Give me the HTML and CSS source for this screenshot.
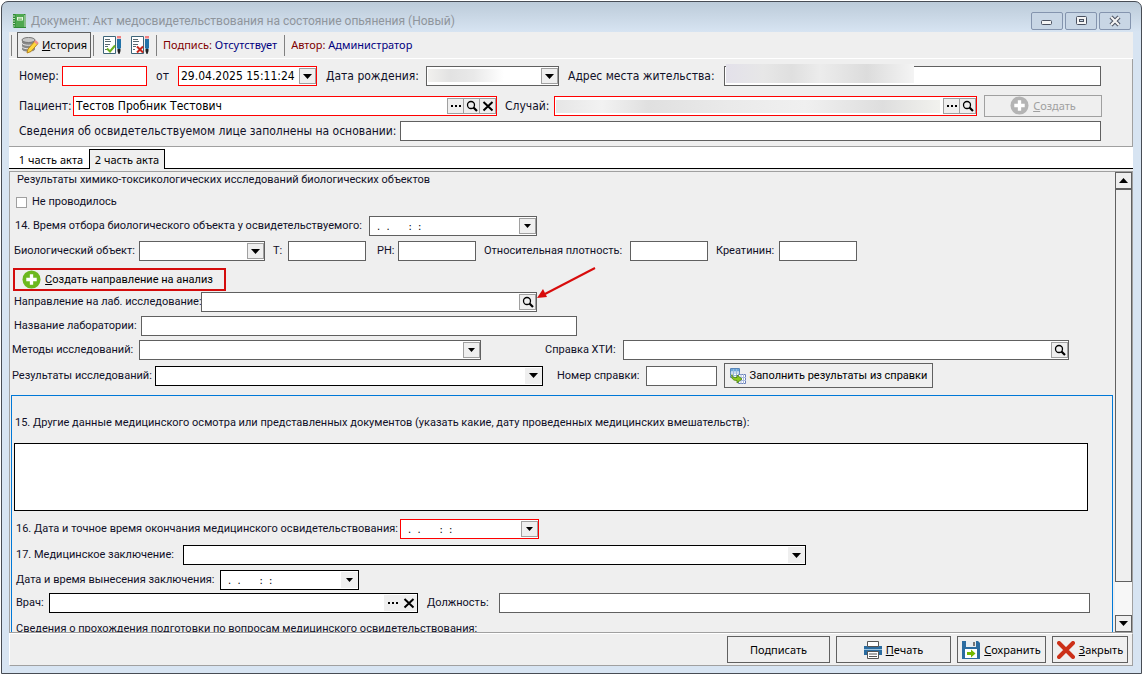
FILE: index.html
```html
<!DOCTYPE html>
<html lang="ru">
<head>
<meta charset="utf-8">
<title>Документ: Акт медосвидетельствования на состояние опьянения (Новый)</title>
<link rel="stylesheet" href="styles.css">
</head>
<body>
<svg class="defs" aria-hidden="true">
  <symbol id="i-down" viewBox="0 0 9 5"><path d="M0 0h9L4.500 5z"/></symbol>
  <symbol id="i-up" viewBox="0 0 9 5"><path d="M0 5h9L4.500 0z"/></symbol>
  <symbol id="i-dots" viewBox="0 0 12 12"><path d="M1 5h2v2H1zM5 5h2v2H5zM9 5h2v2H9z"/></symbol>
  <symbol id="i-find" viewBox="0 0 12 12"><circle cx="5" cy="5" r="3.500" fill="none" stroke="#000" stroke-width="1.300"/><path d="M7.500 7.500L11 11" stroke="#000" stroke-width="2.200"/></symbol>
  <symbol id="i-x" viewBox="0 0 12 12"><path d="M1.500 2L10.500 10.500M10.500 2L1.500 10.500" stroke="#000" stroke-width="2"/></symbol>
  <symbol id="i-doc" viewBox="0 0 20 20"><path d="M1.500 1.500h12v17h-12z" fill="#fff" stroke="#3c6478"/><path d="M3 4.500h5M3 6.500h6M3 9.500h5M3 11.500h3M3 14.500h2" stroke="#5a6a72"/><path d="M15 4h4v9l-2 2-2-2z" fill="#2272a8"/><path d="M15 1h4v2.500h-4z" fill="#f08080"/><path d="M15.500 14h3v2l-1 3h-1l-1-3z" fill="#222"/></symbol>
</svg>
<div class="window">
  <header class="titlebar">
    <svg class="app-icon" viewBox="0 0 16 16"><path d="M2 1h12l1 1v13H3l-1-1z" fill="#2f8a35"/><path d="M4.500 1h8.500v13H4.500z" fill="#4fa850"/><path d="M6 4h6v3.500H6z" fill="#e8f6df"/><path d="M7 5.200h4M7 6.500h4" stroke="#6ab060" stroke-width=".7"/><path d="M1 3h3M1 5.500h3M1 8h3M1 10.500h3M1 13h3" stroke="#c4dec2"/><path d="M14 2v12" stroke="#e4f0e0"/></svg>
    <h1>Документ: Акт медосвидетельствования на состояние опьянения (Новый)</h1>
    <div class="controls">
      <button type="button" aria-label="Свернуть"><svg viewBox="0 0 14 12"><rect x="1.500" y="5.500" width="10" height="4" rx="1" fill="#f4f4f4" stroke="#4a5160"/></svg></button>
      <button type="button" aria-label="Развернуть"><svg viewBox="0 0 14 12"><rect x="2.500" y="1.500" width="10" height="8" rx="1" fill="#f4f4f4" stroke="#4a5160"/><rect x="5.500" y="4.500" width="4" height="2" fill="#c4d3e2" stroke="#4a5160"/></svg></button>
      <button type="button" aria-label="Закрыть окно"><svg viewBox="0 0 14 12"><path d="M3 2l8 8M11 2l-8 8" stroke="#4a5160" stroke-width="4.200"/><path d="M3 2l8 8M11 2l-8 8" stroke="#f4f4f4" stroke-width="2.200"/></svg></button>
    </div>
  </header>
  <main class="client">
    <div class="toolbar">
      <span class="sep"></span>
      <button type="button" class="btn history"><svg viewBox="0 0 18 18"><path d="M1 4v9c0 4 13 4 13 0V4" fill="#888"/><path d="M1 7c0 3 13 3 13 0M1 10.500c0 3 13 3 13 0M1 14c0 3 13 3 13 0" fill="none" stroke="#e6e6e6"/><ellipse cx="7.500" cy="4" rx="6.500" ry="2.500" fill="#c8c8c8" stroke="#777"/><path d="M6 17l1-4 7-8 3 2.500-7 8z" fill="#ffd83c" stroke="#b68420"/><path d="M13 6l1.500-2 3 2.500-1.500 2z" fill="#f09090"/></svg><span><u>И</u>стория</span></button>
      <span class="sep"></span>
      <button type="button" class="tool" aria-label="Подписать документ"><svg viewBox="0 0 20 20"><use href="#i-doc"/><path d="M5 13.500l3 3 5-6" fill="none" stroke="#6cb01c" stroke-width="2"/></svg></button>
      <button type="button" class="tool" aria-label="Снять подпись"><svg viewBox="0 0 20 20"><use href="#i-doc"/><path d="M7 11.500l6 6M13 11.500l-6 6" fill="none" stroke="#c8281c" stroke-width="2"/></svg></button>
      <span class="sep"></span>
      <span class="status sign"><b>Подпись:</b> Отсутствует</span>
      <span class="sep"></span>
      <span class="status"><b>Автор:</b> Администратор</span>
    </div>

    <section class="summary">
      <div class="row r-number">
        <label for="num">Номер:</label><span class="field req"><input id="num"></span>
        <label for="dt" class="center">от</label><span class="field req"><input id="dt" value="29.04.2025 15:11:24"><button type="button" aria-label="Выбрать дату"><svg class="tri"><use href="#i-down"/></svg></button></span>
        <label for="dob">Дата рождения:</label><span class="field"><span class="veil dob"></span><input id="dob"><button type="button" aria-label="Выбрать дату рождения"><svg class="tri"><use href="#i-down"/></svg></button></span>
        <label for="addr">Адрес места жительства:</label><span class="field"><span class="veil addr"></span><input id="addr"></span>
      </div>
      <div class="row r-patient">
        <label for="pat">Пациент:</label><span class="field req"><input id="pat" value="Тестов Пробник Тестович"><button type="button" aria-label="Список пациентов"><svg><use href="#i-dots"/></svg></button><button type="button" aria-label="Найти пациента"><svg><use href="#i-find"/></svg></button><button type="button" aria-label="Очистить пациента"><svg><use href="#i-x"/></svg></button></span>
        <label for="case">Случай:</label><span class="field req"><span class="veil case"></span><input id="case"><button type="button" aria-label="Список случаев"><svg><use href="#i-dots"/></svg></button><button type="button" aria-label="Найти случай"><svg><use href="#i-find"/></svg></button></span>
        <button type="button" class="btn create" disabled><svg viewBox="0 0 20 20"><circle cx="10" cy="10" r="9.500" fill="#b4b4b4"/><path d="M10 4.500v11M4.500 10h11" stroke="#fff" stroke-width="3.500"/></svg><span><u>С</u>оздать</span></button>
      </div>
      <div class="row r-basis">
        <label for="basis">Сведения об освидетельствуемом лице заполнены на основании:</label><span class="field"><input id="basis"></span>
      </div>
    </section>

    <nav class="tabs"><button type="button">1 часть акта</button><button type="button" class="active">2 часть акта</button></nav>

    <div class="pane">
      <div class="form">
        <div class="upper">
          <h2>Результаты химико-токсикологических исследований биологических объектов</h2>
          <label class="check"><input type="checkbox">Не проводилось</label>
          <div class="row r-sample">
            <label for="smp">14. Время отбора биологического объекта у освидетельствуемого:</label><span class="field date"><input id="smp" value=".  .      :  :"><button type="button" aria-label="Выбрать время отбора"><svg class="tri small"><use href="#i-down"/></svg></button></span>
          </div>
          <div class="row r-bio">
            <label for="bio">Биологический объект:</label><span class="field"><select id="bio"><option></option></select><i class="drop"><svg class="tri"><use href="#i-down"/></svg></i></span>
            <label for="t">T:</label><span class="field"><input id="t"></span>
            <label for="ph">PH:</label><span class="field"><input id="ph"></span>
            <label for="dens">Относительная плотность:</label><span class="field"><input id="dens"></span>
            <label for="crea">Креатинин:</label><span class="field"><input id="crea"></span>
          </div>
          <button type="button" class="btn referral"><svg viewBox="0 0 20 20"><circle cx="10" cy="10" r="9.500" fill="#6cb81e"/><path d="M10 4.500v11M4.500 10h11" stroke="#fff" stroke-width="3.500"/></svg><span><u>С</u>оздать направление на анализ</span></button>
          <div class="row r-ref">
            <label for="ref">Направление на лаб. исследование:</label><span class="field"><input id="ref"><button type="button" aria-label="Найти направление"><svg><use href="#i-find"/></svg></button>
              <svg class="pointer" viewBox="0 0 60 34"><path d="M58 2L8 28" stroke="#d80c0c" stroke-width="2"/><path d="M0 32l6-9 4 8z" fill="#d80c0c"/></svg></span>
          </div>
          <div class="row r-lab">
            <label for="lab">Название лаборатории:</label><span class="field"><input id="lab"></span>
          </div>
          <div class="row r-method">
            <label for="met">Методы исследований:</label><span class="field"><select id="met"><option></option></select><i class="drop"><svg class="tri small"><use href="#i-down"/></svg></i></span>
            <label for="hti">Справка ХТИ:</label><span class="field"><input id="hti"><button type="button" aria-label="Найти справку"><svg><use href="#i-find"/></svg></button></span>
          </div>
          <div class="row r-result">
            <label for="res">Результаты исследований:</label><span class="field dark"><select id="res"><option></option></select><i class="drop"><svg class="tri"><use href="#i-down"/></svg></i></span>
            <label for="cert">Номер справки:</label><span class="field"><input id="cert"></span>
            <button type="button" class="btn fill"><svg viewBox="0 0 16 16"><path d="M.5.5h9v9h-9z" fill="#fff" stroke="#5a86b8"/><path d="M1 1h8v2.500H1z" fill="#6aa8dc"/><path d="M.5 5h9M.5 7.500h9M3.500 1v8M6.500 1v8" stroke="#9ab8dc"/><path d="M8.500 6.500h7v9h-7z" fill="#fff" stroke="#6a80b8"/><path d="M8 9.500h8M8 12.500h8M11 6v10M13.500 6v10" stroke="#a8b8dc"/><path d="M2 6.500c0 2.500 1 3 5 3V7l5 4-5 4v-2.500c-4 0-6-2-5-6z" fill="#8cc820" stroke="#4a8010" stroke-width=".8"/></svg><span>Заполнить результаты из справки</span></button>
          </div>
        </div>
        <div class="group">
          <label for="other" class="other">15. Другие данные медицинского осмотра или представленных документов (указать какие, дату проведенных медицинских вмешательств):</label>
          <textarea id="other"></textarea>
          <div class="row r-end">
            <label for="end">16. Дата и точное время окончания медицинского освидетельствования:</label><span class="field req date"><input id="end" value=".  .      :  :"><button type="button" aria-label="Выбрать дату окончания"><svg class="tri small"><use href="#i-down"/></svg></button></span>
          </div>
          <div class="row r-concl">
            <label for="con">17. Медицинское заключение:</label><span class="field dark"><select id="con"><option></option></select><i class="drop"><svg class="tri"><use href="#i-down"/></svg></i></span>
          </div>
          <div class="row r-issued">
            <label for="iss">Дата и время вынесения заключения:</label><span class="field dark date"><input id="iss" value=".  .      :  :"><button type="button" aria-label="Выбрать дату заключения"><svg class="tri small"><use href="#i-down"/></svg></button></span>
          </div>
          <div class="row r-doctor">
            <label for="doc">Врач:</label><span class="field dark"><input id="doc"><button type="button" aria-label="Список врачей"><svg><use href="#i-dots"/></svg></button><button type="button" aria-label="Очистить врача"><svg><use href="#i-x"/></svg></button></span>
            <label for="post">Должность:</label><span class="field"><input id="post"></span>
          </div>
          <p class="training">Сведения о прохождения подготовки по вопросам медицинского освидетельствования:</p>
        </div>
      </div>
      <div class="scroll">
        <button type="button" aria-label="Вверх"><svg class="tri"><use href="#i-up"/></svg></button>
        <span class="thumb"></span><span class="track"></span>
        <button type="button" aria-label="Вниз"><svg class="tri"><use href="#i-down"/></svg></button>
      </div>
    </div>

    <footer class="actions">
      <button type="button" class="btn a-sign">Подписать</button>
      <button type="button" class="btn a-print"><svg viewBox="0 0 18 18"><path d="M0 5h18v9H0z" fill="#2b6ca0"/><path d="M3.500.5h11v5h-11z" fill="#fff" stroke="#555"/><path d="M0 8.500h18" stroke="#9cc4e0"/><path d="M3.500 10.500h11v7h-11z" fill="#fff" stroke="#555"/><path d="M5 13h8M5 15.500h8" stroke="#555"/></svg><span><u>П</u>ечать</span></button>
      <button type="button" class="btn a-save"><svg viewBox="0 0 18 18"><path d="M0 0h16l2 2v16H0z" fill="#2b6ca0"/><path d="M4 0h10v6H4z" fill="#e8eef2"/><path d="M11 1h2v4h-2z" fill="#777"/><path d="M3 8h12v9H3z" fill="#fff"/><path d="M5 11h4V8.500l4.500 4-4.500 4V14H5z" fill="#74b800"/></svg><span><u>С</u>охранить</span></button>
      <button type="button" class="btn a-close"><svg viewBox="0 0 18 18"><path d="M2 2l14 14M16 2L2 16" stroke="#cc3018" stroke-width="4" stroke-linecap="round"/></svg><span><u>З</u>акрыть</span></button>
    </footer>
  </main>
</div>
</body>
</html>
```
FILE: styles.css
```css
* { box-sizing: border-box; }

body {
  margin: 0;
  height: 100vh;
  padding: 1px 0 1px 1px;
  background: #fff;
  color: #101028;
  font: 11px/14px "Noto Sans", sans-serif;
}

button, input, select, textarea { font: inherit; color: #000; margin: 0; border-radius: 0; }
input, select, textarea { outline: 0; }
svg { display: block; flex: none; }
.defs { position: absolute; width: 0; height: 0; }

.window {
  height: 100%;
  min-height: 500px;
  display: flex;
  flex-direction: column;
  padding: 0 8px 7px 7px;
  border: 1px solid #474c54;
  border-radius: 7px 7px 0 0;
  background: #d7e4f2;
  background-image: linear-gradient(#bccbd9, #d7e4f2 30px);
}

.titlebar { display: flex; align-items: center; height: 30px; flex: none; padding: 7px 2px 0; }
.titlebar h1 { flex: 1; margin: 0 0 0 4px; font: 12px/14px Roboto, sans-serif; color: #8f959c; white-space: nowrap; }
.app-icon { width: 16px; height: 16px; }
.controls { display: flex; gap: 2px; }
.controls button { width: 32px; height: 18px; padding: 0; border: 1px solid #8494ae; border-radius: 2px; background: #c8d6e5; display: flex; align-items: center; justify-content: center; }
.controls svg { width: 14px; height: 12px; }

.client { flex: 1; min-height: 0; display: flex; flex-direction: column; background: #efefef; }

.toolbar { display: flex; align-items: center; flex: none; height: 27px; padding: 0 2px; border-bottom: 1px solid #fff; }
.sep { width: 1px; height: 21px; background: #808080; }
.btn { display: flex; align-items: center; justify-content: center; gap: 4px; padding: 0; border: 1px solid #606060; background: #efefef; white-space: nowrap; }
.history { width: 74px; height: 26px; margin: 0 2px 0 5px; gap: 3px; background: #ececec; }
.history svg { width: 18px; height: 18px; }
.tool { width: 20px; height: 20px; padding: 0; margin-left: 8px; border: 0; background: none; }
.tool + .sep { margin-left: 6px; }
.status { margin: 0 6px; color: #000080; white-space: nowrap; }
.status.sign { margin-right: 7px; }
.status b { font-weight: 400; color: #800000; }

.summary { flex: none; height: 88px; padding: 6px 31px 0 10px; border-right: 1px solid #a0a0a0; border-bottom: 1px solid #a0a0a0; font: 12px/14px "DejaVu Sans Condensed", "Noto Sans", sans-serif; }
.row { display: grid; align-items: center; white-space: nowrap; }
.row label { overflow: visible; min-width: 0; }
.center { text-align: center; }

.field { position: relative; display: flex; height: 20px; min-width: 0; padding: 1px 0 1px 1px; border: 1px solid #606060; background: #fff; }
.field.req { border-color: #f00; }
.field.dark { border-color: #000; }
.field input, .field select { flex: 1; min-width: 0; width: 0; height: 100%; padding: 0 1px; border: 0; background: none; appearance: none; }
.field button, .drop { flex: none; width: 17px; height: 16px; padding: 0; border: 1px solid #a0a0a0; background: #efefef; display: flex; align-items: center; justify-content: center; pointer-events: none; }
.field button + button { margin-left: -1px; }
.field.dark button, .field.dark .drop { border-color: #efefef; }
.field svg { width: 12px; height: 12px; }
svg.tri { width: 9px; height: 5px; }
.field svg.small { width: 7px; height: 4px; }
.date input { padding-left: 6px; white-space: pre; font: 11px/14px "DejaVu Sans Condensed", sans-serif; }

.veil { position: absolute; background: linear-gradient(90deg, #f1f0ee, #e2e2e2 30%, #e9e9e9 60%, #fff); }
.veil.dob { left: 1px; top: 2px; width: 76px; height: 13px; }
.veil.addr { left: 1px; top: -3px; width: 188px; height: 19px; background: linear-gradient(90deg, #e3e1ea, #e7e7e7 20%, #dfdfdf 35%, #ececec 50%, #dcdcdc 75%, #f4f4f4); }
.veil.case { left: 1px; top: 3px; right: 36px; height: 13px; background: linear-gradient(90deg, #e6e6e6, #f2f2f2 12%, #e0e0e0 24%, #eaeaea 45%, #f0f0f0 65%, #dedede 85%, #f2f2ee); }

.r-number { grid-template-columns: 43px 85px 31px 139px 109px 133px 165px minmax(0, 1fr); height: 22px; }
.r-number label:nth-of-type(n+3) { padding-left: 9px; }
.r-patient { grid-template-columns: 54px minmax(0, 424fr) 57px minmax(0, 423fr) 7px 118px; height: 23px; margin: 7px -1px 0 0; }
.r-patient label + .field + label { padding-left: 8px; }
.r-basis { grid-template-columns: 381px minmax(0, 1fr); height: 20px; margin-top: 4px; }
.create { grid-column: 6; height: 22px; border-color: #a0a0a0; font: 11px/14px "Noto Sans", sans-serif; }
.create span { color: #a0a0a0; }
.create svg, .referral svg { width: 19px; height: 19px; }

.tabs { flex: none; display: flex; align-items: flex-end; height: 22px; background: linear-gradient(#000, #000) bottom / 100% 1px no-repeat #fff; }
.tabs button { height: 20px; width: 80px; padding: 2px 0 0 4px; border: 0; background: none; white-space: nowrap; }
.tabs .active { width: 76px; padding: 0; border: 1px solid #000; border-bottom: 0; background: #efefef; }

.pane { flex: 1; min-height: 0; display: flex; margin-top: 2px; border: 1px solid #a0a0a0; font-family: Roboto, sans-serif; }
.form { flex: 1; min-width: 0; overflow: hidden; padding: 0 1px; }
.upper { padding-top: 1px; }
.upper h2 { margin: 0 0 0 6px; font: inherit; white-space: nowrap; }
.check { display: flex; align-items: center; gap: 5px; margin: 8px 0 0 5px; width: max-content; }
.check input { appearance: none; width: 11px; height: 11px; border: 1px solid #a0a0a0; background: #fff; }
.upper .row { margin-top: 4px; }
.upper .r-sample { grid-template-columns: 354px 168px; margin: 7px 0 0 4px; }
.upper .r-bio { grid-template-columns: 125px 126px 23px 78px 32px 78px 154px 78px 71px 78px; margin: 5px 0 0 3px; }
.r-bio label:nth-of-type(n+2) { padding-left: 8px; }
.r-bio label:nth-of-type(3) { padding-left: 11px; }
.referral { height: 23px; width: 213px; margin: 7px 0 1px 2px; padding-right: 4px; border: 2px solid #d40c0c; }
.upper .r-ref { grid-template-columns: 187px 336px; margin: 0 0 0 3px; }
.pointer { position: absolute; left: 335px; top: -27px; }
.field svg.pointer { width: 60px; height: 34px; }
.r-lab { grid-template-columns: 127px 436px; padding-left: 3px; }
.r-method { grid-template-columns: 127px 342px 142px minmax(0, 1fr); padding: 0 44px 0 1px; }
.r-method label + .field + label { padding-left: 64px; }
.upper .r-result { grid-template-columns: 143px 388px 103px 71px 7px 209px; margin: 3px 0 0 1px; }
.r-result label + .field + label { padding-left: 14px; }
.fill { grid-column: 6; height: 25px; }
.fill svg { width: 16px; height: 16px; }

.group { margin-top: 7px; height: 300px; padding: 20px 24px 0 2px; border: 1px solid #0078d7; }
.other { display: block; padding-left: 1px; white-space: nowrap; }
.group textarea { display: block; width: 100%; height: 68px; margin-top: 13px; border: 1px solid #000; background: #fff; resize: none; }
.group .row { padding-left: 2px; }
.r-end { grid-template-columns: 384px 139px; margin-top: 8px; }
.r-concl { grid-template-columns: 167px 623px; margin-top: 6px; }
.r-issued { grid-template-columns: 204px 139px; margin-top: 5px; }
.r-doctor { grid-template-columns: 33px 369px 81px minmax(0, 1fr); margin: 3px -2px 0 0; }
.r-doctor label + .field + label { padding-left: 9px; }
.training { margin: 9px 0 0 2px; white-space: nowrap; }

.scroll { flex: none; width: 17px; display: flex; flex-direction: column; margin-left: 1px; }
.scroll button { flex: none; width: 17px; height: 17px; padding: 0; border: 1px solid #606060; background: #efefef; display: flex; align-items: center; justify-content: center; }
.thumb { flex: 393; border: 1px solid #606060; background: #efefef; }
.track { flex: 33; background: #f7f7f7; }

.actions { flex: none; display: flex; align-items: center; justify-content: flex-end; gap: 6px; height: 33px; padding-right: 4px; border: 1px solid; border-color: #fff #a0a0a0 #a0a0a0 #fff; }
.actions .btn { height: 27px; }
.actions svg { width: 18px; height: 18px; }
.a-sign { width: 103px; }
.a-print { width: 115px; }
.a-save { width: 89px; }
.a-close { width: 76px; }
```
